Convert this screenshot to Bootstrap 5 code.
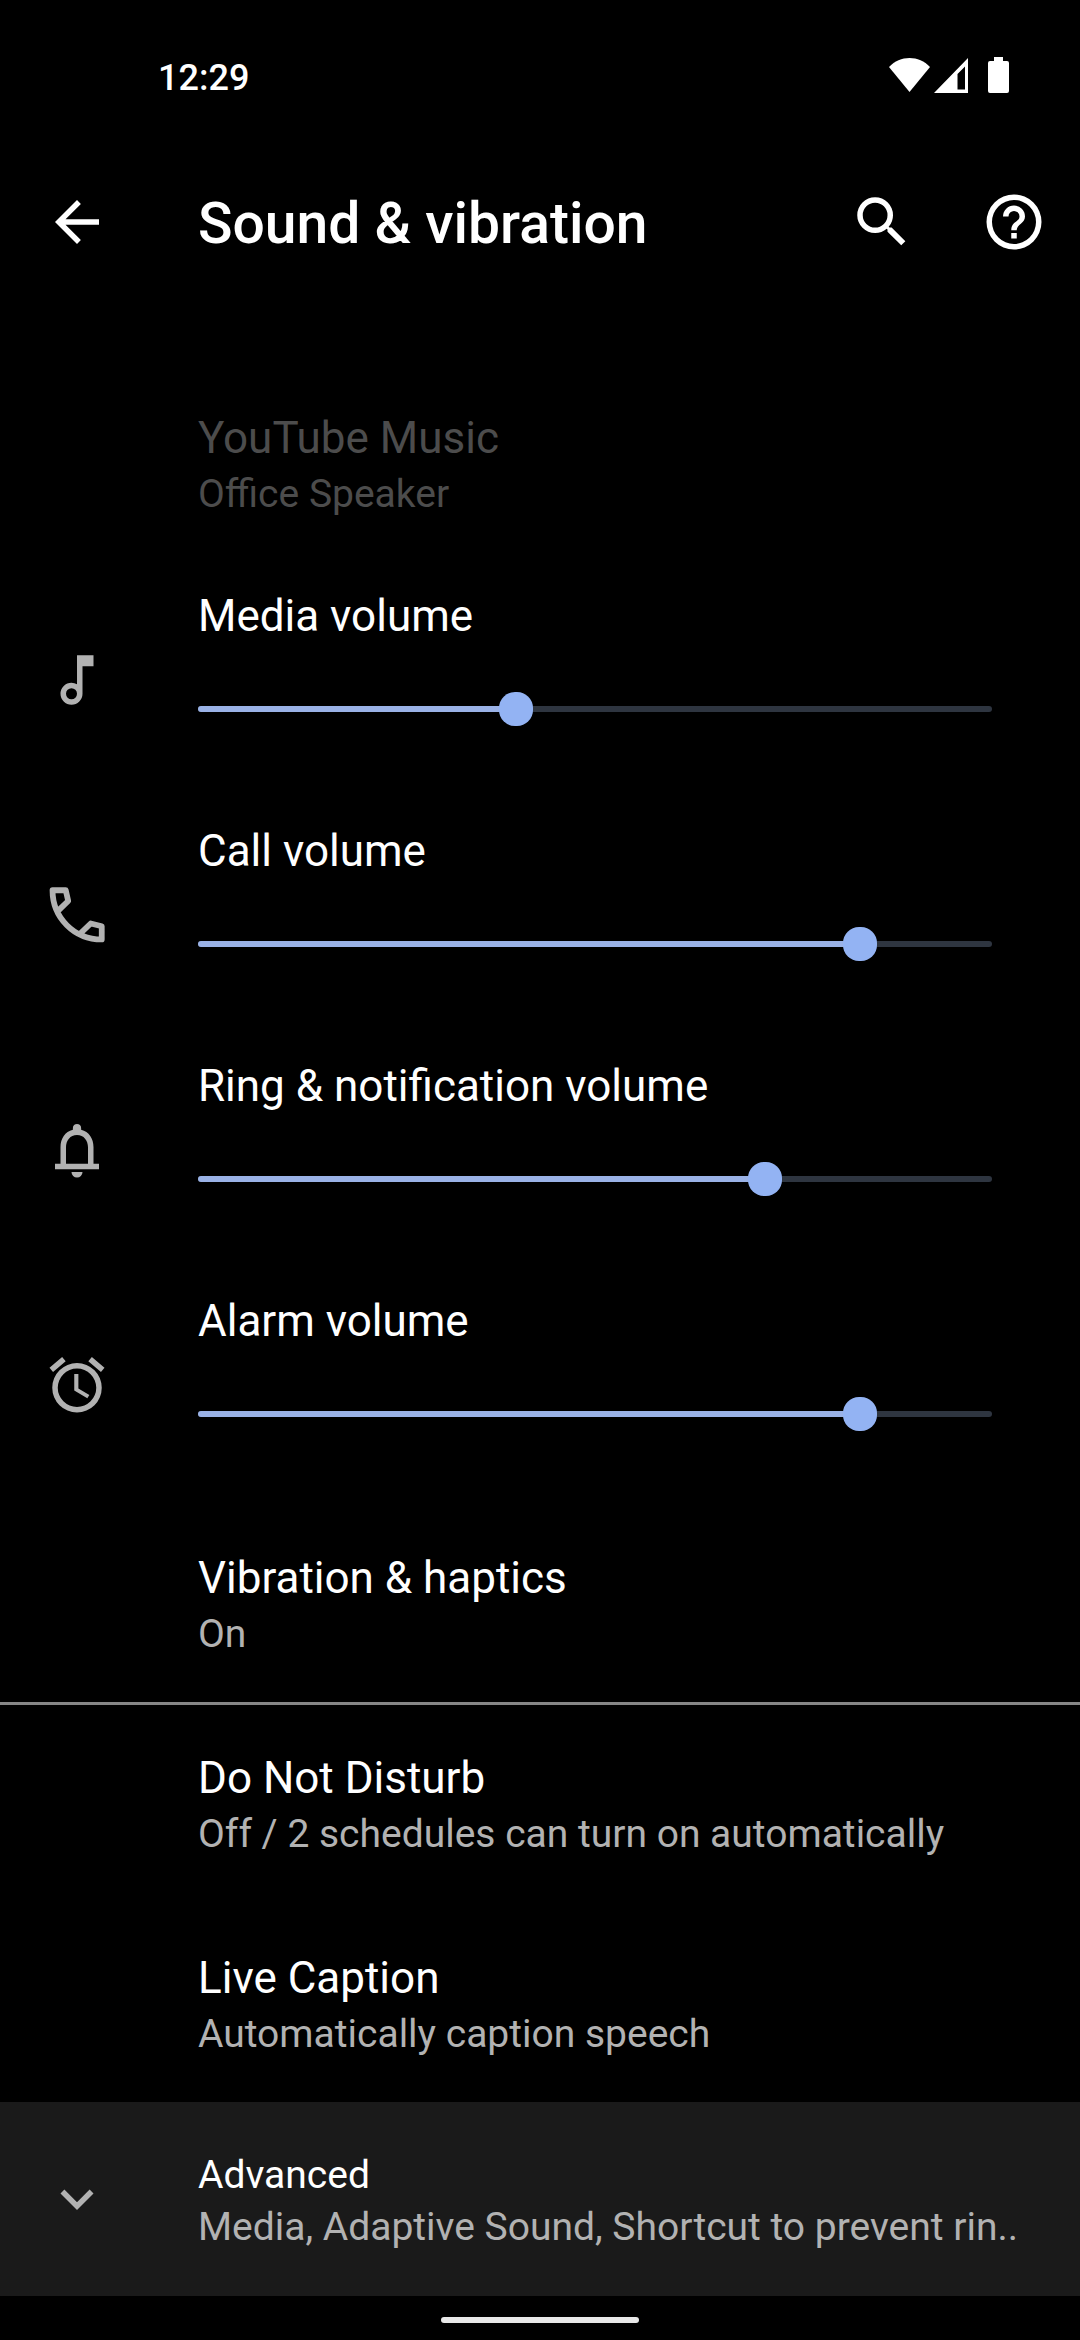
<!DOCTYPE html>
<html lang="en" data-bs-theme="dark">
<head>
<meta charset="utf-8">
<meta name="viewport" content="width=device-width, initial-scale=1">
<title>Sound &amp; vibration</title>
<link rel="stylesheet" href="https://cdn.jsdelivr.net/npm/bootstrap@5.3.0/dist/css/bootstrap.min.css">
<style>
  :root { --accent: #93b3f3; --fill: #9ab2e6; --rail: #2e3540; --soft: #b2b2b2; --off: #4c4c4c; }
  body { background: #000; color: #fff; font-family: Roboto, "Liberation Sans", sans-serif; }
  .status-bar { height: 144px; padding: 56px 71px 0 158px; }
  .clock { font-size: 36px; line-height: 44px; font-weight: 500; }
  .app-bar { height: 156px; padding: 0 33px 0 44px; margin-bottom: 62px; }
  .app-title { font-size: 57px; line-height: 66px; font-weight: 500; padding: 4px 0 0 88px; }
  .app-actions { gap: 66px; }
  .glyph { width: 66px; height: 66px; fill: currentColor; display: block; }
  .pref { min-height: 200px; padding: 46px 44px 42px 198px; }
  .pref.ruled { border-top: 3px solid #868686; padding-top: 43px; }
  .pref-name { font-size: 44px; line-height: 60px; }
  .pref-note { font-size: 39px; line-height: 52px; color: var(--soft); }
  .pref.disabled-item, .disabled-item .pref-note { color: var(--off); }
  .volume { min-height: 235px; padding: 0 88px 0 44px; }
  .volume .glyph, .more .glyph { color: var(--soft); }
  .volume-body { padding: 24px 0 55px 88px; gap: 30px; }
  .slider { display: grid; align-items: center; height: 66px; }
  .slider > * { grid-area: 1 / 1; }
  .slider .progress { height: 6px; border-radius: 3px; background: var(--rail); }
  .slider .progress-bar { background: var(--fill); }
  .slider .form-range { position: relative; width: auto; height: 66px; margin: 0 -17px; }
  .slider .form-range::-webkit-slider-runnable-track { background: transparent; height: 34px; }
  .slider .form-range::-webkit-slider-thumb { width: 34px; height: 34px; margin-top: 0; background: var(--accent); box-shadow: none; }
  .slider .form-range::-moz-range-track { background: transparent; }
  .slider .form-range::-moz-range-thumb { width: 34px; height: 34px; background: var(--accent); }
  .more { min-height: 194px; padding: 0 44px; background: #1a1a1a; }
  .more-body { padding: 4px 0 0 88px; min-width: 0; }
  .more-name { font-size: 39px; line-height: 52px; }
  .home-zone { height: 44px; padding-top: 21px; }
  .home-pill { width: 198px; height: 6px; border-radius: 3px; background: #e8e8e8; }
</style>
</head>
<body>
<div class="d-flex flex-column min-vh-100">
  <div class="status-bar d-flex justify-content-between align-items-start">
    <span class="clock">12:29</span>
    <div class="d-flex">
      <svg width="120" height="38" viewBox="0 0 120 38" fill="#fff" aria-label="Wi-Fi, mobile signal, battery" role="img">
        <path d="M0 11C11-1 30-1 41 11L20.500 36z"/>
        <path fill-rule="evenodd" d="M45 37L79 2V37zM68.500 18V33.500H76V10.500z"/>
        <path d="M105 1h9v4h4a2 2 0 0 1 2 2v28a2 2 0 0 1-2 2H101a2 2 0 0 1-2-2V7a2 2 0 0 1 2-2h4z"/>
      </svg>
    </div>
  </div>

  <header class="app-bar d-flex align-items-center">
    <button type="button" class="btn border-0 p-0 text-white" aria-label="Back">
      <svg class="glyph" viewBox="0 0 24 24"><path d="M20 11H7.830l5.590-5.590L12 4l-8 8 8 8 1.410-1.410L7.830 13H20z"/></svg>
    </button>
    <h1 class="app-title m-0 flex-grow-1">Sound &amp; vibration</h1>
    <div class="app-actions d-flex">
      <button type="button" class="btn border-0 p-0 text-white" aria-label="Search">
        <svg class="glyph" viewBox="0 0 24 24"><path d="M15.500 14h-.79l-.28-.27A6.470 6.470 0 0 0 16 9.500 6.500 6.500 0 1 0 9.500 16c1.610 0 3.090-.59 4.230-1.570l.27.28v.79l5 4.990L20.490 19zm-6 0a4.500 4.500 0 1 1 0-9 4.500 4.500 0 0 1 0 9z"/></svg>
      </button>
      <button type="button" class="btn border-0 p-0 text-white" aria-label="Help">
        <svg class="glyph" viewBox="0 0 24 24"><path d="M11 18h2v-2h-2zm1-16a10 10 0 1 0 0 20 10 10 0 0 0 0-20zm0 18a8 8 0 1 1 0-16 8 8 0 0 1 0 16zm0-14a4 4 0 0 0-4 4h2a2 2 0 1 1 4 0c0 2-3 1.750-3 5h2c0-2.250 3-2.500 3-5a4 4 0 0 0-4-4z"/></svg>
      </button>
    </div>
  </header>

  <main>
    <div class="pref disabled-item">
      <div class="pref-name">YouTube Music</div>
      <div class="pref-note">Office Speaker</div>
    </div>

    <div class="volume d-flex align-items-center">
      <svg class="glyph flex-shrink-0" viewBox="0 0 24 24"><path d="M12 3l.01 10.550A4 4 0 0 0 10 13a4 4 0 1 0 4 4V7h4V3zm-2 16a2 2 0 1 1 0-4 2 2 0 0 1 0 4z"/></svg>
      <div class="volume-body d-flex flex-column flex-grow-1">
        <label class="pref-name" for="media">Media volume</label>
        <div class="slider">
          <div class="progress"><div class="progress-bar" style="width:40%"></div></div>
          <input class="form-range" type="range" id="media" min="0" max="25" value="10">
        </div>
      </div>
    </div>

    <div class="volume d-flex align-items-center">
      <svg class="glyph flex-shrink-0" viewBox="0 0 24 24"><path fill="none" stroke="currentColor" stroke-width="2.100" stroke-linejoin="round" d="M4.900 10.700L8.800 6.900 7.900 3H3.100C3.100 13 11 20.900 21 20.900V16.100L17 15.100 13 18.900"/></svg>
      <div class="volume-body d-flex flex-column flex-grow-1">
        <label class="pref-name" for="call">Call volume</label>
        <div class="slider">
          <div class="progress"><div class="progress-bar" style="width:83.333%"></div></div>
          <input class="form-range" type="range" id="call" min="0" max="6" value="5">
        </div>
      </div>
    </div>

    <div class="volume d-flex align-items-center">
      <svg class="glyph flex-shrink-0" viewBox="0 0 24 24"><path fill-rule="evenodd" d="M12 22a2 2 0 0 0 2-2h-4a2 2 0 0 0 2 2zM18 17v-6c0-3.070-1.630-5.640-4.500-6.320V4a1.500 1.500 0 0 0-3 0v.68C7.640 5.360 6 7.920 6 11v6H4v2h16v-2zM16 17H8v-6c0-2.480 1.510-4.500 4-4.500s4 2.020 4 4.500z"/></svg>
      <div class="volume-body d-flex flex-column flex-grow-1">
        <label class="pref-name" for="ring">Ring &amp; notification volume</label>
        <div class="slider">
          <div class="progress"><div class="progress-bar" style="width:71.429%"></div></div>
          <input class="form-range" type="range" id="ring" min="0" max="7" value="5">
        </div>
      </div>
    </div>

    <div class="volume d-flex align-items-center">
      <svg class="glyph flex-shrink-0" viewBox="0 0 24 24"><path d="M22 5.720l-4.600-3.860-1.290 1.530 4.600 3.860zM7.880 3.390L6.600 1.860 2 5.710l1.290 1.530zM12.500 8H11v6l4.750 2.850.75-1.230-4-2.370zM12 4a9 9 0 1 0 0 18 9 9 0 0 0 0-18zm0 16a7 7 0 1 1 0-14 7 7 0 0 1 0 14z"/></svg>
      <div class="volume-body d-flex flex-column flex-grow-1">
        <label class="pref-name" for="alarm">Alarm volume</label>
        <div class="slider">
          <div class="progress"><div class="progress-bar" style="width:83.333%"></div></div>
          <input class="form-range" type="range" id="alarm" min="1" max="7" value="6">
        </div>
      </div>
    </div>

    <a href="#vibration" class="pref d-block text-reset text-decoration-none">
      <div class="pref-name">Vibration &amp; haptics</div>
      <div class="pref-note">On</div>
    </a>
    <a href="#dnd" class="pref ruled d-block text-reset text-decoration-none">
      <div class="pref-name">Do Not Disturb</div>
      <div class="pref-note">Off / 2 schedules can turn on automatically</div>
    </a>
    <a href="#caption" class="pref d-block text-reset text-decoration-none">
      <div class="pref-name">Live Caption</div>
      <div class="pref-note">Automatically caption speech</div>
    </a>
    <button type="button" class="more btn border-0 rounded-0 w-100 d-flex align-items-center text-start text-white" aria-expanded="false">
      <svg class="glyph flex-shrink-0" viewBox="0 0 24 24"><path d="M7.410 8.590L12 13.170l4.590-4.580L18 10l-6 6-6-6z"/></svg>
      <span class="more-body">
        <span class="more-name d-block">Advanced</span>
        <span class="pref-note d-block text-nowrap">Media, Adaptive Sound, Shortcut to prevent rin..</span>
      </span>
    </button>
  </main>

  <div class="home-zone d-flex justify-content-center mt-auto"><div class="home-pill"></div></div>
</div>
<script src="https://cdn.jsdelivr.net/npm/bootstrap@5.3.0/dist/js/bootstrap.bundle.min.js"></script>
</body>
</html>
